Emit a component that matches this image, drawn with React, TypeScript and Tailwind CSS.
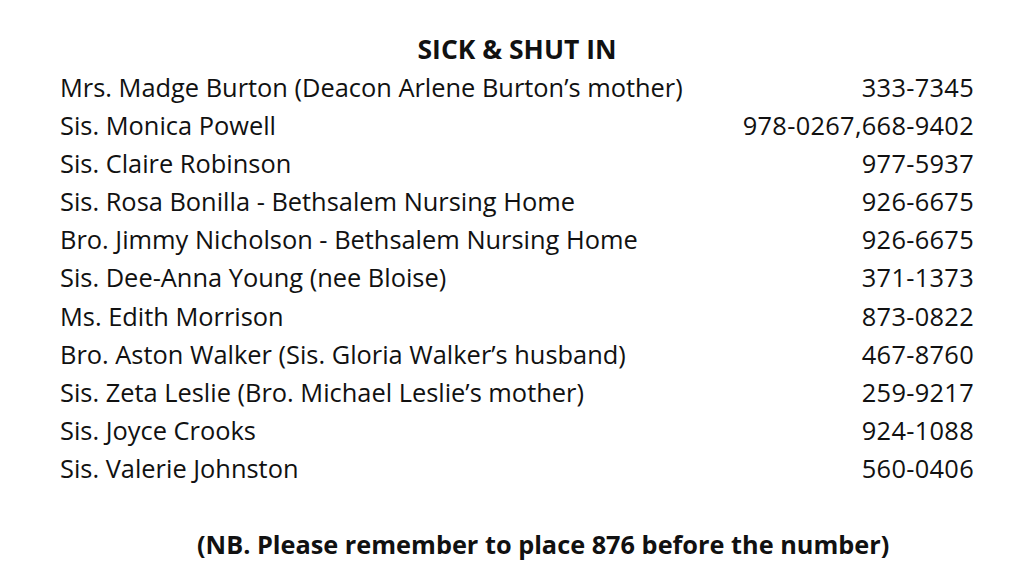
const ROWS = [
  { name: "Mrs. Madge Burton (Deacon Arlene Burton\u2019s mother)", phone: "333-7345" },
  { name: "Sis. Monica Powell", phone: "978-0267,668-9402" },
  { name: "Sis. Claire Robinson", phone: "977-5937" },
  { name: "Sis. Rosa Bonilla - Bethsalem Nursing Home", phone: "926-6675" },
  { name: "Bro. Jimmy Nicholson - Bethsalem Nursing Home", phone: "926-6675" },
  { name: "Sis. Dee-Anna Young (nee Bloise)", phone: "371-1373" },
  { name: "Ms. Edith Morrison", phone: "873-0822" },
  { name: "Bro. Aston Walker (Sis. Gloria Walker\u2019s husband)", phone: "467-8760" },
  { name: "Sis. Zeta Leslie (Bro. Michael Leslie\u2019s mother)", phone: "259-9217" },
  { name: "Sis. Joyce Crooks", phone: "924-1088" },
  { name: "Sis. Valerie Johnston", phone: "560-0406" },
];

export default function App() {
  return (
    <div
      className="w-[1024px] h-[563px] bg-white text-[#111] overflow-hidden"
      style={{ fontFamily: '"Open Sans", "Noto Sans", sans-serif' }}
    >
      <div className="pl-[60px] pr-[50px] pt-[32px]">
        <h1 className="text-center text-[26.5px] font-bold leading-[34px]">SICK &amp; SHUT IN</h1>
        <ul className="mt-[2px]">
          {ROWS.map((r) => (
            <li key={r.name} className="flex justify-between text-[25.4px] leading-[38.1px] whitespace-nowrap">
              <span>{r.name}</span>
              <span className="tracking-[0.3px]">{r.phone}</span>
            </li>
          ))}
        </ul>
        <p className="mt-[40px] pl-[137px] text-[25.3px] font-bold leading-[34px] whitespace-nowrap">
          (NB. Please remember to place 876 before the number)
        </p>
      </div>
    </div>
  );
}
